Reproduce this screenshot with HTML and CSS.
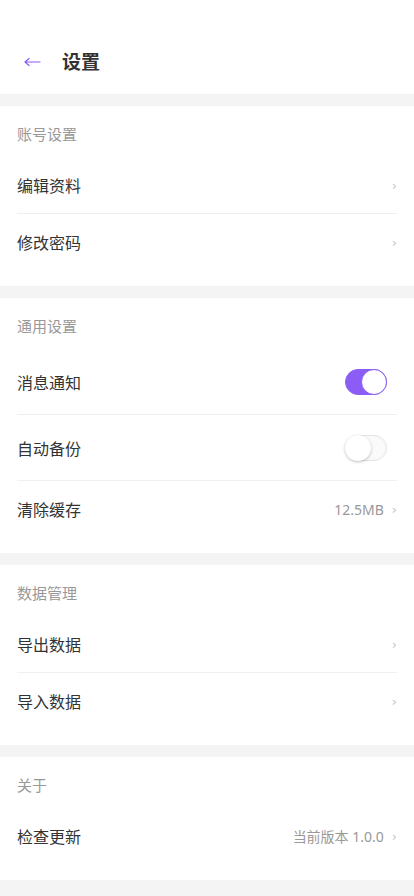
FILE: index.html
```html
<!DOCTYPE html>
<html lang="zh-CN">
<head>
  <meta charset="UTF-8" />
  <meta name="viewport" content="width=device-width, initial-scale=1.0"/>
  <title>设置</title>
  <link rel="stylesheet" href="styles.css">
</head>
<body>

  <header class="topbar">
    <span class="back">
      <svg width="17" height="10" viewBox="0 0 17 10" fill="none" stroke="#8b5cf6" stroke-width="1.2" stroke-linecap="round" stroke-linejoin="round">
        <path d="M1 5H16M1 5L5 1.5M1 5L5 8.5"/>
      </svg>
    </span>
    <h1 class="title">设置</h1>
  </header>

  <section class="group">
    <div class="group-title">账号设置</div>
    <div class="row">
      <span class="label">编辑资料</span>
      <span class="chevron">›</span>
    </div>
    <div class="row">
      <span class="label">修改密码</span>
      <span class="chevron">›</span>
    </div>
  </section>

  <section class="group">
    <div class="group-title">通用设置</div>
    <div class="row row-tall">
      <span class="label">消息通知</span>
      <span class="switch on"><span class="knob"></span></span>
    </div>
    <div class="row row-tall">
      <span class="label">自动备份</span>
      <span class="switch"><span class="knob"></span></span>
    </div>
    <div class="row">
      <span class="label">清除缓存</span>
      <span class="extra">12.5MB <span class="chevron">›</span></span>
    </div>
  </section>

  <section class="group">
    <div class="group-title">数据管理</div>
    <div class="row">
      <span class="label">导出数据</span>
      <span class="chevron">›</span>
    </div>
    <div class="row">
      <span class="label">导入数据</span>
      <span class="chevron">›</span>
    </div>
  </section>

  <section class="group">
    <div class="group-title">关于</div>
    <div class="row">
      <span class="label">检查更新</span>
      <span class="extra">当前版本 1.0.0 <span class="chevron">›</span></span>
    </div>
  </section>

</body>
</html>
```

FILE: styles.css
```css
body {
  margin: 0;
  font-family: 'Noto Sans', 'Noto Sans CJK SC', sans-serif;
  background: #f4f4f4;
  color: #333;
  min-height: 100vh;
}

.topbar {
  background: #fff;
  height: 94px;
  padding: 0 16px 0 24px;
  box-sizing: border-box;
  display: flex;
  align-items: center;
  padding-top: 30px;
  margin-bottom: 12px;
}

.back {
  display: flex;
  align-items: center;
  width: 17px;
  margin-right: 21px;
}

.title {
  margin: 0;
  font-size: 19px;
  font-weight: bold;
  color: #333;
  line-height: 1;
}

.group {
  background: #fff;
  padding: 16px 17px;
  margin-bottom: 12px;
}

.group-title {
  font-size: 15px;
  color: #999;
  line-height: 24px;
  margin-bottom: 11px;
}

.row {
  height: 56px;
  display: flex;
  align-items: center;
  justify-content: space-between;
  border-bottom: 1px solid #f0f0f0;
}

.row:last-child {
  border-bottom: none;
}

.row-tall {
  height: 65px;
}

.label {
  font-size: 16px;
  color: #333;
}

.extra {
  font-size: 14px;
  color: #999;
  display: flex;
  align-items: center;
}

.chevron {
  font-family: 'DejaVu Sans', sans-serif;
  font-size: 13px;
  color: #c4c4c4;
  margin-left: 8px;
}

.row > .chevron {
  margin-left: 0;
}

.switch {
  position: relative;
  width: 42px;
  height: 26px;
  border-radius: 13px;
  box-sizing: border-box;
  background: #fafafa;
  border: 1px solid #e4e4e4;
  margin-right: 10px;
}

.knob {
  position: absolute;
  top: -1px;
  left: -1px;
  width: 26px;
  height: 26px;
  border-radius: 50%;
  box-sizing: border-box;
  background: #fff;
  box-shadow: 0 1px 3px rgba(0,0,0,0.25);
}

.switch.on {
  background: #8b5cf6;
  border-color: #8b5cf6;
}

.switch.on .knob {
  left: auto;
  right: -1px;
  border: 1.5px solid #8b5cf6;
  box-shadow: none;
}
```
